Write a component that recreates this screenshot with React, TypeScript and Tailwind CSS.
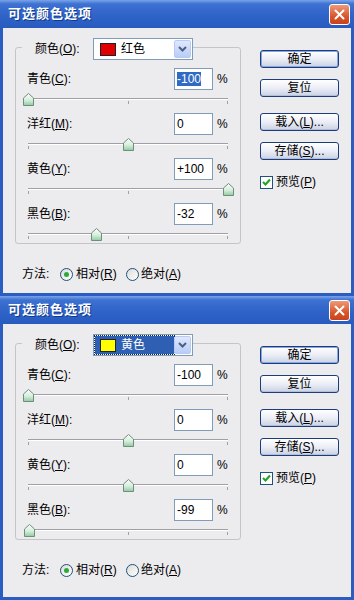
import React from 'react';

const FONT = "font-['Liberation_Sans','Noto_Sans_CJK_SC',sans-serif]";

type Row = { name: string; key: string; value: number };

const Thumb = ({ pos }: { pos: number }) => (
  <svg
    className="absolute top-[-6px]"
    style={{ left: `${pos - 5.5}px` }}
    width="11"
    height="13"
    viewBox="0 0 11 13"
  >
    <defs>
      <linearGradient id="thumbFill" x1="0" y1="0" x2="0" y2="1">
        <stop offset="0" stopColor="#fafdfb" />
        <stop offset="0.55" stopColor="#d7eedd" />
        <stop offset="1" stopColor="#8fcb9f" />
      </linearGradient>
    </defs>
    <path d="M5.5 0.5 L10.5 5 L10.5 12.5 L0.5 12.5 L0.5 5 Z" fill="url(#thumbFill)" stroke="#6f8f7c" strokeWidth="1" />
  </svg>
);

const Slider = ({ value, last }: { value: number; last: boolean }) => (
  <div className={last ? 'h-[18px] pt-[8px]' : 'h-[23px] pt-[8px]'}>
    <div className="relative ml-[12px] w-[200px] h-[2px] border-t border-[#a09ea6] bg-white">
      <div className="absolute left-0 top-[2px] w-px h-[3px] bg-[#a09ea6]" />
      <div className="absolute left-[100px] top-[2px] w-px h-[3px] bg-[#a09ea6]" />
      <div className="absolute left-[199px] top-[2px] w-px h-[3px] bg-[#a09ea6]" />
      <Thumb pos={((value + 100) / 200) * 200} />
    </div>
  </div>
);

const Button = ({ children, primary }: { children: React.ReactNode; primary?: boolean }) => (
  <div
    className={`w-[79px] h-[18px] rounded-[3px] border border-[#1d3d7a] flex items-center justify-center text-[12px] text-black bg-[linear-gradient(to_bottom,#ffffff_0%,#eceef6_50%,#c9d1e4_100%)] ${
      primary ? 'shadow-[inset_0_0_0_1px_#86a6e6]' : 'shadow-[inset_0_-1px_0_#b3bed8]'
    }`}
  >
    {children}
  </div>
);

const Radio = ({ on }: { on: boolean }) => (
  <div className="w-[13px] h-[13px] rounded-full border border-[#1c5180] bg-[linear-gradient(135deg,#dcdcd6,#ffffff)] flex items-center justify-center">
    {on && <div className="w-[5px] h-[5px] rounded-full bg-[#2fa83a]" />}
  </div>
);

const Dialog = ({
  height,
  swatch,
  colorName,
  focused,
  rows,
  selectFirst,
}: {
  height: string;
  swatch: string;
  colorName: string;
  focused: boolean;
  rows: Row[];
  selectFirst: boolean;
}) => (
  <div className={`${height} flex flex-col`}>
    <div className="h-[28px] shrink-0 flex items-center justify-between bg-[linear-gradient(to_bottom,#7aa4e8_0%,#3d72d2_14%,#2f63c8_55%,#295bbf_100%)]">
      <span className="pl-[8px] text-[13px] font-bold tracking-[1px] text-white [text-shadow:1px_1px_0_#0f3a8c]">
        可选颜色选项
      </span>
      <div className="mr-[4px] w-[21px] h-[21px] rounded-[3px] border border-white bg-[linear-gradient(to_bottom,#ee9a78,#d9562d_60%,#c8431c)] flex items-center justify-center">
        <svg width="11" height="11" viewBox="0 0 11 11">
          <path d="M1.5 1.5 L9.5 9.5 M9.5 1.5 L1.5 9.5" stroke="#fff" strokeWidth="2" strokeLinecap="round" />
        </svg>
      </div>
    </div>

    <div className="flex-1 flex border-x-[3px] border-b-[3px] border-[#2b5cc1] bg-[#ecebee] text-[12px] text-black">
      <div className="pl-[12px] pt-[19px]">
        <div className="w-[226px] border border-[#c6c3c9] rounded-[3px]">
          <div className="-mt-[10px] ml-[6px] w-fit flex items-center bg-[#ecebee]">
            <span className="pl-[13px] w-[71px]">
              颜色(<span className="underline">O</span>):
            </span>
            <div className="w-[100px] h-[22px] border border-[#7f9db9] bg-white flex items-center">
              <div
                className={`ml-[1px] h-[18px] w-[79px] flex items-center ${
                  focused ? 'bg-[#2f5fb3] outline outline-1 outline-dotted outline-[#10224a]' : ''
                }`}
              >
                <div className={`ml-[5px] w-[16px] h-[13px] border border-[#222] ${swatch}`} />
                <span className={`ml-[5px] ${focused ? 'text-white' : 'text-black'}`}>{colorName}</span>
              </div>
              <div className="ml-auto mr-[1px] w-[17px] h-[18px] rounded-[2px] border border-[#b9cbf3] bg-[linear-gradient(to_bottom,#dfe8fd,#b9cdf8)] flex items-center justify-center">
                <svg width="9" height="6" viewBox="0 0 9 6">
                  <path d="M1 1 L4.5 4.5 L8 1" fill="none" stroke="#4d6185" strokeWidth="2" />
                </svg>
              </div>
            </div>
          </div>

          <div className="mt-[8px] flex flex-col">
            {rows.map((row, i) => (
              <div key={row.key}>
                <div className="flex items-center h-[22px]">
                  <span className="w-[158px] pl-[11px]">
                    {row.name}(<span className="underline">{row.key}</span>):
                  </span>
                  <div className="w-[39px] h-[22px] border border-[#7f9db9] bg-white flex items-center pl-[2px]">
                    {selectFirst && i === 0 ? (
                      <span className="bg-[#316ac5] text-white leading-[14px]">{row.value > 0 ? `+${row.value}` : row.value}</span>
                    ) : (
                      <span>{row.value > 0 ? `+${row.value}` : row.value}</span>
                    )}
                  </div>
                  <span className="ml-[4px]">%</span>
                </div>
                <Slider value={row.value} last={i === rows.length - 1} />
              </div>
            ))}
          </div>
        </div>

        <div className="mt-[19px] h-[22px] pl-[7px] flex items-center">
          <span className="w-[38px]">方法:</span>
          <Radio on />
          <span className="ml-[3px] w-[50px]">
            相对(<span className="underline">R</span>)
          </span>
          <Radio on={false} />
          <span className="ml-[2px]">
            绝对(<span className="underline">A</span>)
          </span>
        </div>
      </div>

      <div className="ml-[19px] pt-[22px] flex flex-col">
        <Button primary>确定</Button>
        <div className="mt-[11px]">
          <Button>复位</Button>
        </div>
        <div className="mt-[16px]">
          <Button>
            载入(<span className="underline">L</span>)...
          </Button>
        </div>
        <div className="mt-[11px]">
          <Button>
            存储(<span className="underline">S</span>)...
          </Button>
        </div>
        <div className="mt-[13px] flex items-center">
          <div className="w-[13px] h-[13px] border border-[#1c5180] bg-white flex items-center justify-center">
            <svg width="9" height="8" viewBox="0 0 9 8">
              <path d="M1 4 L3.5 6.5 L8 1.5" fill="none" stroke="#21a121" strokeWidth="2" />
            </svg>
          </div>
          <span className="ml-[3px]">
            预览(<span className="underline">P</span>)
          </span>
        </div>
      </div>
    </div>
  </div>
);

export default function App() {
  return (
    <div className={`w-[354px] h-[600px] overflow-hidden ${FONT}`}>
      <Dialog
        height="h-[296px]"
        swatch="bg-[#e00000]"
        colorName="红色"
        focused={false}
        selectFirst
        rows={[
          { name: '青色', key: 'C', value: -100 },
          { name: '洋红', key: 'M', value: 0 },
          { name: '黄色', key: 'Y', value: 100 },
          { name: '黑色', key: 'B', value: -32 },
        ]}
      />
      <Dialog
        height="h-[304px]"
        swatch="bg-[#ffff00]"
        colorName="黄色"
        focused
        selectFirst={false}
        rows={[
          { name: '青色', key: 'C', value: -100 },
          { name: '洋红', key: 'M', value: 0 },
          { name: '黄色', key: 'Y', value: 0 },
          { name: '黑色', key: 'B', value: -99 },
        ]}
      />
    </div>
  );
}
